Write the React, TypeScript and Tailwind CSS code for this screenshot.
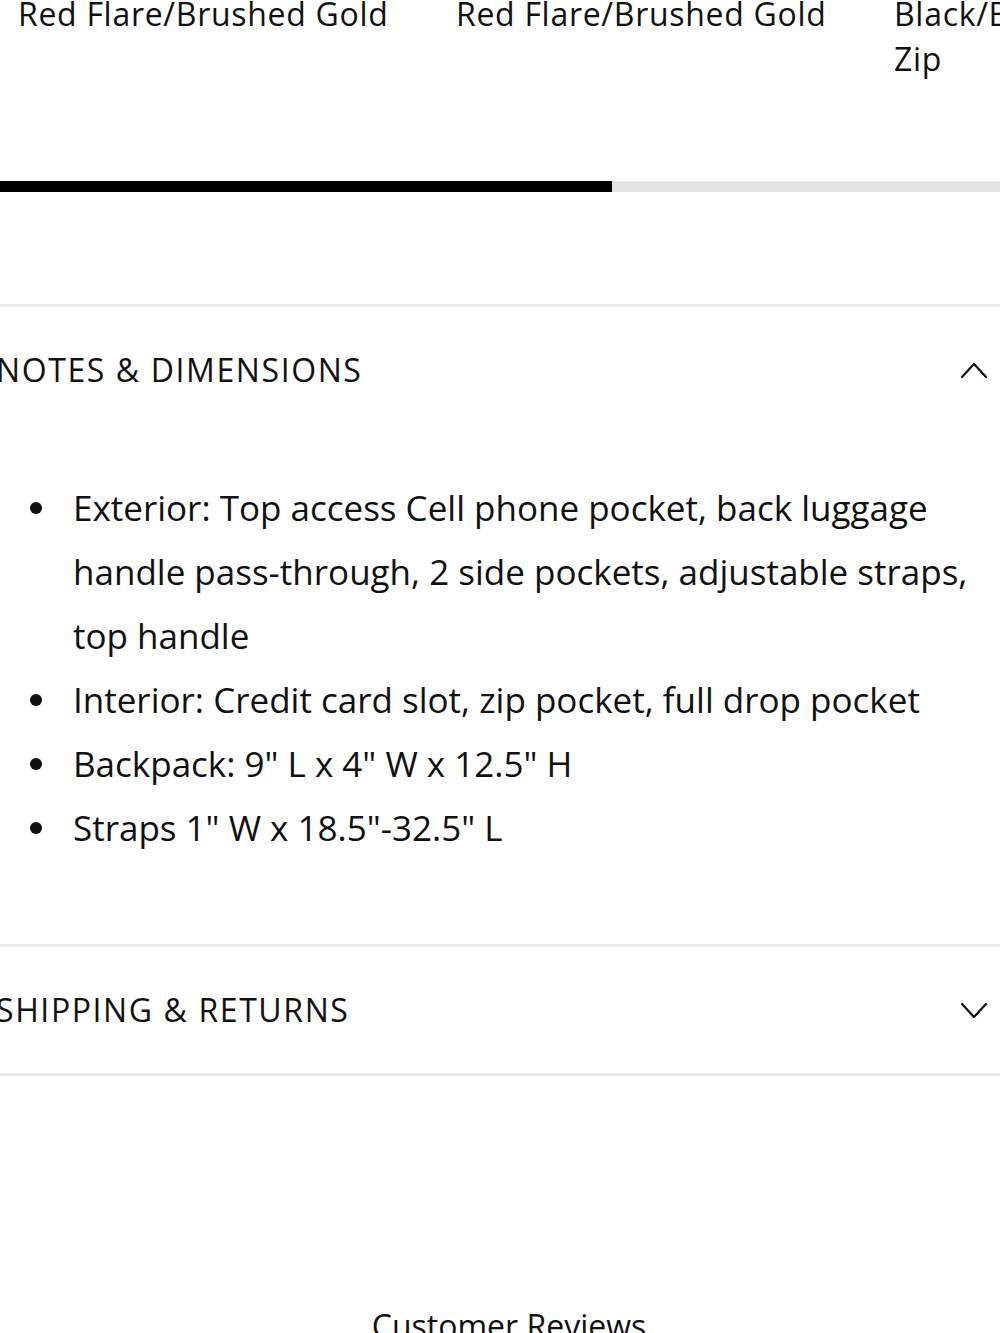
const swatches = [
  { name: "Red Flare/Brushed Gold" },
  { name: "Red Flare/Brushed Gold" },
  { name: "Black/Brushed Gold\nZip" },
];

const details = [
  "Exterior: Top access Cell phone pocket, back luggage handle pass-through, 2 side pockets, adjustable straps, top handle",
  "Interior: Credit card slot, zip pocket, full drop pocket",
  'Backpack: 9" L x 4" W x 12.5" H',
  'Straps 1" W x 18.5"-32.5" L',
];

const Chevron = ({ up }: { up?: boolean }) => (
  <svg width="28" height="17" viewBox="0 0 28 17" fill="none" className="shrink-0">
    <polyline
      points={up ? "2,15 14,2 26,15" : "2,2 14,15 26,2"}
      stroke="#111"
      strokeWidth="2.2"
      strokeLinecap="round"
      strokeLinejoin="round"
    />
  </svg>
);

const AccordionHeader = ({ title, open }: { title: string; open?: boolean }) => (
  <div className="flex h-[126px] items-center justify-between pr-[12px]">
    <span className="ml-[-4px] text-[32px] tracking-[0.05em] text-[#111]">{title}</span>
    <Chevron up={open} />
  </div>
);

export default function App() {
  return (
    <div
      className="h-[1333px] w-[1000px] overflow-hidden bg-white text-[#111]"
      style={{ fontFamily: "'Open Sans', 'Noto Sans', sans-serif" }}
    >
      {/* variant carousel */}
      <div className="mt-[-9px] flex h-[90px] gap-[62px] overflow-hidden pl-[18px]">
        {swatches.map((s, i) => (
          <div
            key={i}
            className="w-[376px] shrink-0 whitespace-pre-line text-[32px] leading-[45px] tracking-[0.7px]"
          >
            {s.name}
          </div>
        ))}
      </div>

      <div className="mt-[100px] flex h-[11px]">
        <div className="w-[612px] bg-black" />
        <div className="flex-1 bg-[#e3e3e3]" />
      </div>

      <div className="mt-[112px] border-t-[3px] border-[#ebebeb]">
        <AccordionHeader title="NOTES & DIMENSIONS" open />
        <ul className="pb-[84px] pt-[43px]">
          {details.map((d, i) => (
            <li key={i} className="flex pr-[14px] text-[35px] leading-[64px]">
              <span className="flex h-[64px] w-[73px] shrink-0 items-center pl-[30px]">
                <span className="h-[12px] w-[12px] rounded-full bg-[#111]" />
              </span>
              <span>{d}</span>
            </li>
          ))}
        </ul>
      </div>

      <div className="border-y-[3px] border-[#ebebeb]">
        <AccordionHeader title="SHIPPING & RETURNS" />
      </div>

      <div className="ml-[18px] mt-[226px] text-center text-[32px]">Customer Reviews</div>
    </div>
  );
}
